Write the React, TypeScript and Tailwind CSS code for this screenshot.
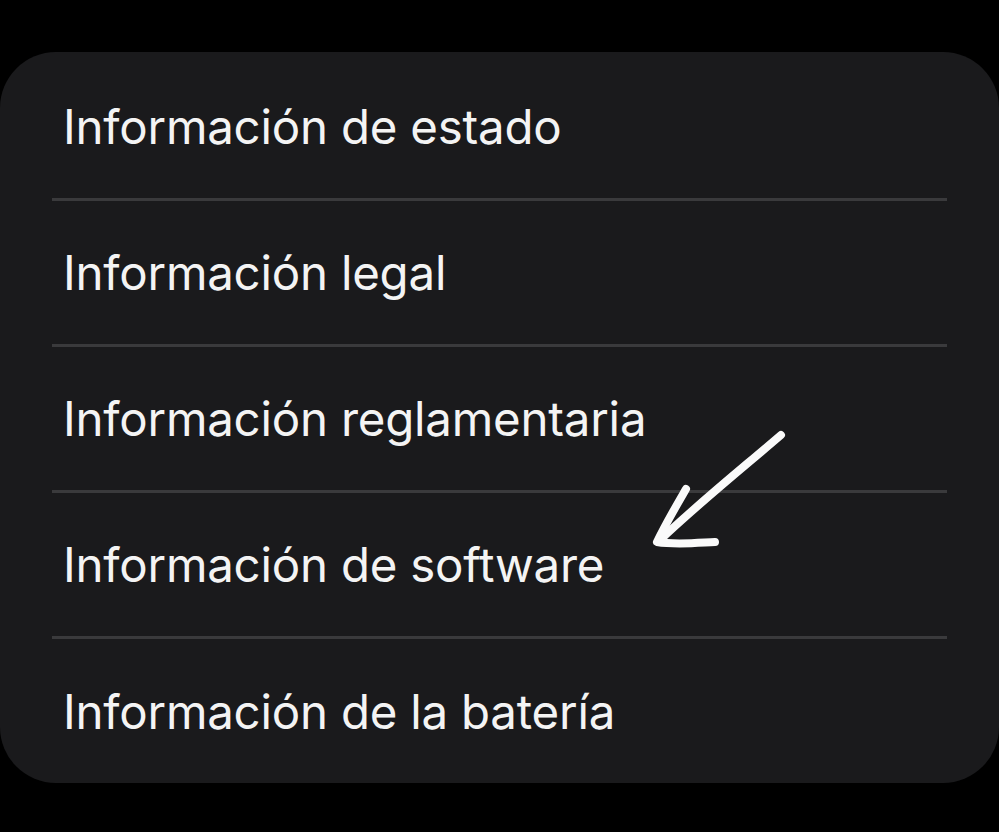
const ITEMS = [
  "Información de estado",
  "Información legal",
  "Información reglamentaria",
  "Información de software",
  "Información de la batería",
];

export default function App() {
  return (
    <div className="w-[999px] h-[832px] bg-black pt-[52px] overflow-hidden" style={{ fontFamily: "Inter, 'Noto Sans', sans-serif" }}>
      <div className="relative w-full h-[731px] rounded-[56px] bg-[#1a1a1c] px-[52px] pt-[3px]">
        {ITEMS.map((label, i) => (
          <div
            key={label}
            className={`h-[146px] flex items-center pl-[11px] ${i < ITEMS.length - 1 ? "border-b-[3px] border-[#3a3a3c]" : ""}`}
          >
            <span className="text-[47.4px] leading-none text-[#f4f4f4] tracking-[-0.2px]">{label}</span>
          </div>
        ))}
        {/* hand-drawn arrow */}
        <svg className="absolute left-0 top-0 pointer-events-none" width="999" height="731" viewBox="0 52 999 731">
          <g fill="none" stroke="#fafafa" strokeWidth="8" strokeLinecap="round" strokeLinejoin="round">
            <path d="M781 435 C 745 466, 700 502, 659 541" />
            <path d="M686 489 C 675 508, 665 525, 657 542 C 675 545, 695 543, 715 542" />
          </g>
        </svg>
      </div>
    </div>
  );
}
